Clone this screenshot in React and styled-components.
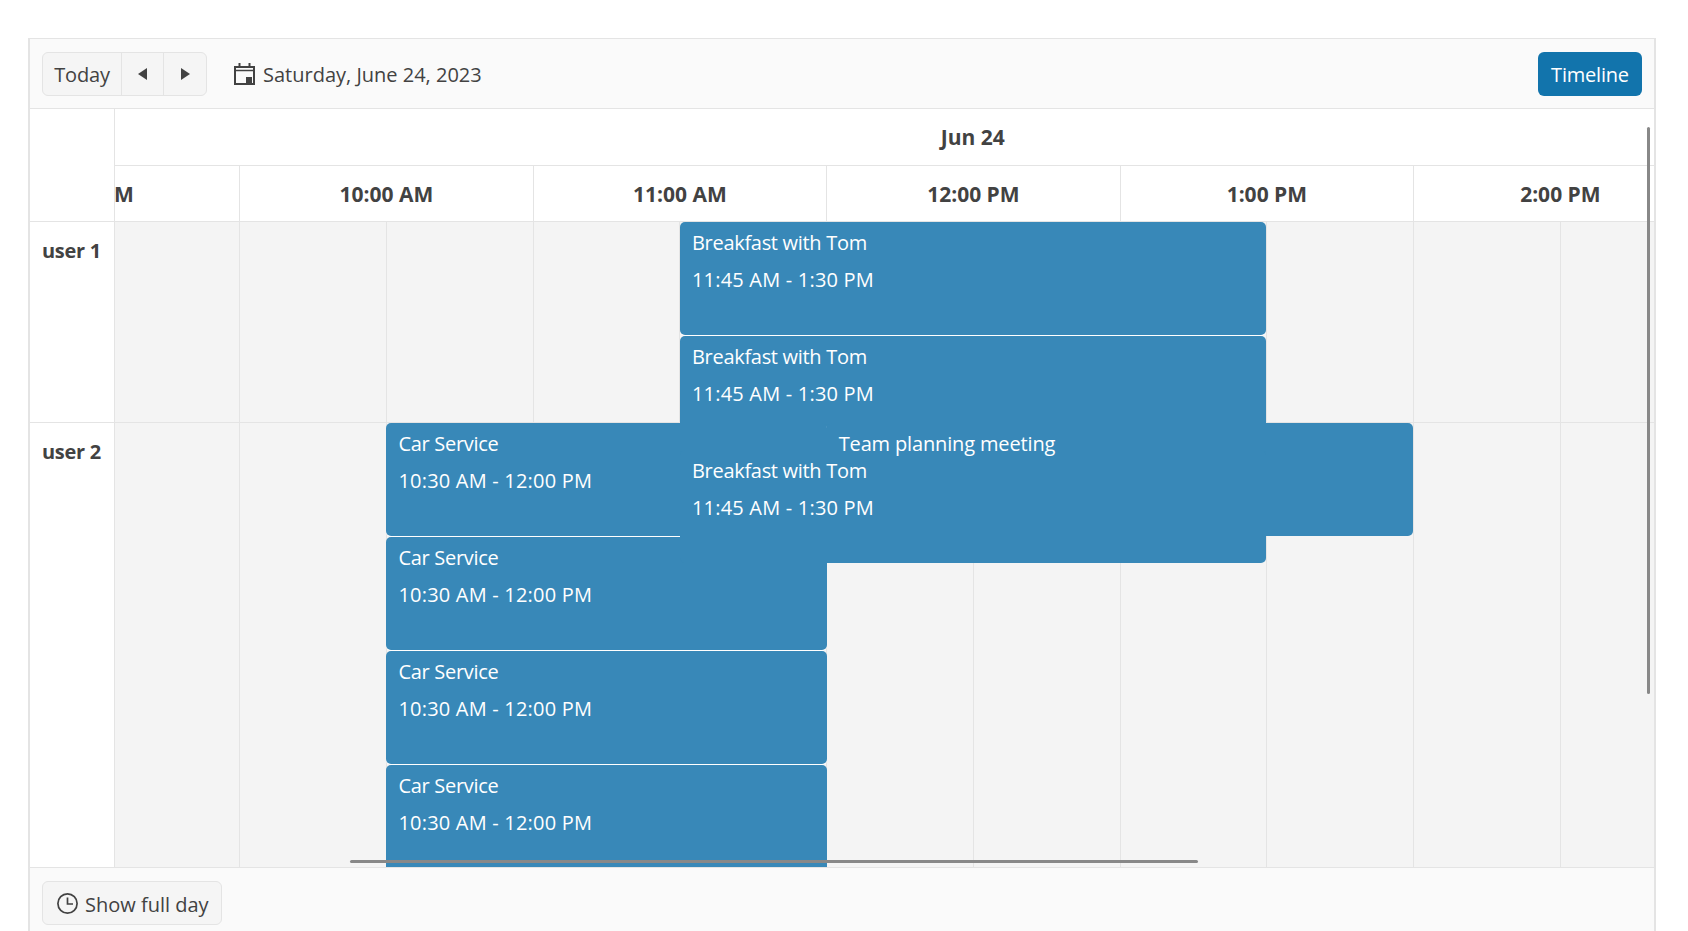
import React from "react";
import styled, { createGlobalStyle } from "styled-components";

const HOUR_WIDTH = 293.5;
const FIRST_HOUR = 9;
const ROW_STEP = 114;

const hours = ["9:00 AM", "10:00 AM", "11:00 AM", "12:00 PM", "1:00 PM", "2:00 PM", "3:00 PM"];

const resources = [
  { name: "user 1", height: 201 },
  { name: "user 2", height: 444 },
];

const breakfast = { title: "Breakfast with Tom", time: "11:45 AM - 1:30 PM", start: 11.5, end: 13.5 };
const carService = { title: "Car Service", time: "10:30 AM - 12:00 PM", start: 10.5, end: 12.002 };

// order matters, later events paint over the earlier ones
const events = [
  { ...breakfast, top: 0, stacked: true },
  { ...breakfast, top: ROW_STEP, stacked: true },
  { ...carService, top: 201, stacked: true },
  { ...carService, top: 201 + ROW_STEP, stacked: true },
  { ...carService, top: 201 + ROW_STEP * 2, stacked: true },
  { ...carService, top: 201 + ROW_STEP * 3 },
  { title: "Team planning meeting", start: 12, end: 14, top: 201, raised: true },
  { ...breakfast, top: ROW_STEP * 2 },
];

const GlobalStyle = createGlobalStyle`
  html, body {
    margin: 0;
    height: 100%;
    overflow: hidden;
    background: #fff;
  }
  body {
    font-family: "Open Sans", "Liberation Sans", sans-serif;
    font-size: 20px;
    color: #424242;
  }
`;

const Scheduler = styled.div`
  box-sizing: border-box;
  display: flex;
  flex-direction: column;
  width: 1628px;
  height: 920px;
  margin: 38px 0 0 28px;
  border: 2px solid #e4e4e4;
  border-top-width: 1px;
  border-bottom: 0;
`;

const Toolbar = styled.div`
  box-sizing: border-box;
  display: flex;
  flex: none;
  align-items: center;
  justify-content: space-between;
  height: 70px;
  padding: 0 12px;
  background: #fafafa;
  border-bottom: 1px solid #e4e4e4;
`;

const ToolbarLeft = styled.div`
  display: flex;
  align-items: center;
  gap: 27px;
`;

const ButtonGroup = styled.div`
  display: flex;
  height: 44px;
  background: #f5f5f5;
  border: 1px solid #e4e4e4;
  border-radius: 6px;
  box-sizing: border-box;
`;

const GroupButton = styled.button`
  display: flex;
  align-items: center;
  justify-content: center;
  width: ${(p) => p.$width}px;
  padding: 0;
  font: inherit;
  color: inherit;
  background: none;
  border: 0;
  border-left: ${(p) => (p.$first ? "0" : "1px solid #e4e4e4")};
`;

const ButtonText = styled.span`
  position: relative;
  top: 1px;
  letter-spacing: ${(p) => (p.$tight ? "-0.2px" : "0")};
`;

const DateLabel = styled.div`
  display: flex;
  align-items: center;
  gap: 8px;
`;

const PrimaryButton = styled.button`
  box-sizing: border-box;
  width: 104px;
  height: 44px;
  padding: 0;
  font: inherit;
  color: #fff;
  background: #1274ac;
  border: 0;
  border-radius: 6px;
`;

const Body = styled.div`
  position: relative;
  display: grid;
  flex: none;
  grid-template-columns: 85px 1fr;
  grid-template-rows: 758px;
  height: 758px;
`;

const ResourceColumn = styled.div`
  box-sizing: border-box;
  background: #fff;
  border-right: 1px solid #e4e4e4;
`;

const HeaderCorner = styled.div`
  box-sizing: border-box;
  height: 113px;
  border-bottom: 1px solid #e4e4e4;
`;

const ResourceName = styled.div`
  box-sizing: border-box;
  height: ${(p) => p.$height}px;
  padding: 15px 0 0 12px;
  font-weight: 700;
  line-height: 28px;
  letter-spacing: -0.3px;
  white-space: nowrap;
  border-bottom: ${(p) => (p.$last ? "0" : "1px solid #e4e4e4")};
`;

const Viewport = styled.div`
  overflow: hidden;
  min-width: 0;
`;

const Track = styled.div`
  position: relative;
  width: ${HOUR_WIDTH * hours.length}px;
  margin-left: -169.4px;
`;

const DayHeader = styled.div`
  box-sizing: border-box;
  display: flex;
  align-items: center;
  justify-content: center;
  height: 57px;
  font-size: 21px;
  font-weight: 700;
  background: #fff;
  border-bottom: 1px solid #e4e4e4;
`;

const HourRow = styled.div`
  display: grid;
  grid-template-columns: repeat(${hours.length}, 1fr);
  height: 56px;
`;

const HourCell = styled.div`
  box-sizing: border-box;
  display: flex;
  align-items: center;
  justify-content: center;
  padding-top: 1px;
  font-size: 21px;
  font-weight: 700;
  background: #fff;
  border-left: 1px solid #e4e4e4;
  border-bottom: 1px solid #e4e4e4;
`;

const SlotRow = styled.div`
  display: grid;
  grid-template-columns: repeat(${hours.length * 2}, 1fr);
  height: ${(p) => p.$height}px;
`;

const Slot = styled.div`
  box-sizing: border-box;
  background: #f4f4f4;
  border-left: 1px solid #e4e4e4;
  border-bottom: ${(p) => (p.$last ? "0" : "1px solid #e4e4e4")};
`;

const EventLayer = styled.div`
  position: absolute;
  top: 113px;
  left: 0.6px;
  right: 0;
`;

const Event = styled.div`
  position: absolute;
  box-sizing: border-box;
  height: 113px;
  padding: 7px 12px 0;
  color: #fff;
  line-height: 28px;
  background: #3888b8;
  border-radius: 5px;
  box-shadow: ${(p) => (p.$stacked ? "0 1px 0 #fff" : "none")};
`;

const EventTitle = styled.div`
  letter-spacing: ${(p) => (p.$raised ? "-0.15px" : "-0.3px")};
  ${(p) => p.$raised && "position: relative; z-index: 1;"}
`;

const EventTime = styled.div`
  margin-top: 9px;
  letter-spacing: 0.2px;
`;

const VerticalThumb = styled.div`
  position: absolute;
  top: 18px;
  right: 4px;
  width: 3px;
  height: 567px;
  background: #888;
  border-radius: 2px;
`;

const HorizontalThumb = styled.div`
  position: absolute;
  left: 320px;
  bottom: 4px;
  width: 848px;
  height: 3px;
  background: #888;
  border-radius: 2px;
`;

const Footer = styled.div`
  flex: 1;
  padding: 13px 12px 0;
  background: #fafafa;
  border-top: 1px solid #e4e4e4;
`;

const FooterButton = styled.button`
  box-sizing: border-box;
  display: flex;
  align-items: center;
  gap: 7px;
  width: 180px;
  height: 44px;
  padding: 0 0 0 14px;
  font: inherit;
  color: inherit;
  background: #f5f5f5;
  border: 1px solid #e4e4e4;
  border-radius: 6px;
`;

function CaretIcon({ dir }) {
  return (
    <svg width="9" height="12" viewBox="0 0 9 12" fill="#424242">
      {dir === "left" ? <path d="M9 0v12L0 6z" /> : <path d="M0 0v12l9-6z" />}
    </svg>
  );
}

function CalendarIcon() {
  return (
    <svg width="21" height="22" viewBox="0 0 21 22" fill="none" stroke="#424242" strokeWidth="2">
      <path d="M1 4h19v17H1z" />
      <path d="M1 7.5h19" strokeWidth="1.5" />
      <path d="M5.5 0v4M15.5 0v4" />
      <path d="M12 14h6v6h-6z" fill="#424242" stroke="none" />
    </svg>
  );
}

function ClockIcon() {
  return (
    <svg width="21" height="21" viewBox="0 0 21 21" fill="none" stroke="#424242" strokeWidth="1.7">
      <circle cx="10.5" cy="10.5" r="9.6" />
      <path d="M10.5 4.5v6.5h5.5" />
    </svg>
  );
}

export default function App() {
  return (
    <>
      <GlobalStyle />
      <Scheduler>
        <Toolbar>
          <ToolbarLeft>
            <ButtonGroup>
              <GroupButton $first $width={78}><ButtonText $tight>Today</ButtonText></GroupButton>
              <GroupButton $width={42}><CaretIcon dir="left" /></GroupButton>
              <GroupButton $width={43}><CaretIcon dir="right" /></GroupButton>
            </ButtonGroup>
            <DateLabel>
              <CalendarIcon />
              <ButtonText>Saturday, June 24, 2023</ButtonText>
            </DateLabel>
          </ToolbarLeft>
          <PrimaryButton><ButtonText $tight>Timeline</ButtonText></PrimaryButton>
        </Toolbar>
        <Body>
          <ResourceColumn>
            <HeaderCorner />
            {resources.map((r, i) => (
              <ResourceName key={r.name} $height={r.height} $last={i === resources.length - 1}>
                {r.name}
              </ResourceName>
            ))}
          </ResourceColumn>
          <Viewport>
            <Track>
              <DayHeader>Jun 24</DayHeader>
              <HourRow>
                {hours.map((h) => (
                  <HourCell key={h}>{h}</HourCell>
                ))}
              </HourRow>
              {resources.map((r, i) => (
                <SlotRow key={r.name} $height={r.height}>
                  {Array.from({ length: hours.length * 2 }, (_, n) => (
                    <Slot key={n} $last={i === resources.length - 1} />
                  ))}
                </SlotRow>
              ))}
              <EventLayer>
                {events.map((e, i) => (
                  <Event
                    key={i}
                    $stacked={e.stacked}
                    style={{
                      left: (e.start - FIRST_HOUR) * HOUR_WIDTH,
                      width: (e.end - e.start) * HOUR_WIDTH - 0.6,
                      top: e.top,
                    }}
                  >
                    <EventTitle $raised={e.raised}>{e.title}</EventTitle>
                    {e.time && <EventTime>{e.time}</EventTime>}
                  </Event>
                ))}
              </EventLayer>
            </Track>
          </Viewport>
          <VerticalThumb />
          <HorizontalThumb />
        </Body>
        <Footer>
          <FooterButton>
            <ClockIcon />
            <ButtonText>Show full day</ButtonText>
          </FooterButton>
        </Footer>
      </Scheduler>
    </>
  );
}
